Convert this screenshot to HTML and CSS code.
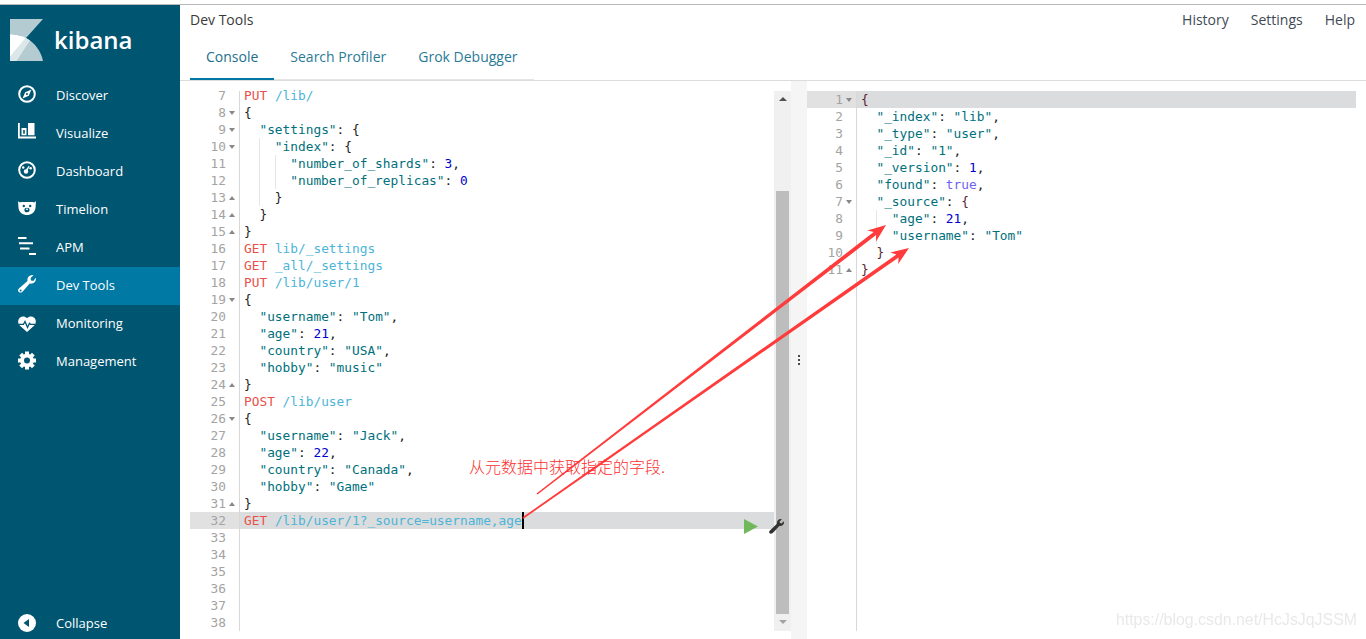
FILE: index.html
```html
<!DOCTYPE html>
<html lang="en">
<head>
<meta charset="utf-8">
<title>Dev Tools - Kibana</title>
<link rel="stylesheet" href="styles.css">
</head>
<body>
<div class="top-rule"></div>
<div class="app">
  <aside class="sidebar">
    <div class="brand">
      <svg class="brand-mark" viewBox="0 0 33 42">
        <path class="lm-top" d="M0 0H33L16 19C11 16.500 5 15.300 0 15.300Z"/>
        <path class="lm-right" d="M16 19C25 24 31 32 33 42H0V15.300C5 15.300 11 16.500 16 19Z"/>
        <path class="lm-white" d="M0 15.300C5 15.300 11 16.500 16 19L0 38Z"/>
        <path class="lm-mid" d="M16 19L20 21.500L6.500 42H0V38Z"/>
      </svg>
      <span class="brand-name">kibana</span>
    </div>
    <nav class="nav">
      <a class="nav-item"><svg class="nav-icon" viewBox="0 0 18 18"><circle class="ic-line" cx="9" cy="9" r="7.800"/><path class="ic-fill" d="M13.500 4.500L10.800 10.800L4.500 13.500L7.200 7.200ZM9 8A1 1 0 1 0 9 10A1 1 0 1 0 9 8Z"/></svg><span>Discover</span></a>
      <a class="nav-item"><svg class="nav-icon" viewBox="0 0 18 18"><path class="ic-fill" d="M0 0H1.800V13.600H18V15.500H0ZM3.500 5H8.500V12.300H3.500ZM10 0H16.500V12.300H10Z"/><path class="ic-hole" d="M5.200 7H6.800V10.800H5.200Z"/></svg><span>Visualize</span></a>
      <a class="nav-item"><svg class="nav-icon" viewBox="0 0 18 18"><circle class="ic-line" cx="9" cy="9" r="7.800"/><circle class="ic-fill" cx="8" cy="10.500" r="2.200"/><circle class="ic-fill" cx="5.200" cy="6.500" r="1.200"/><circle class="ic-fill" cx="12.600" cy="7.200" r="1.300"/><path class="ic-fill" d="M8 8.500L10.800 4.800L11.500 5.300L9.500 9.800Z"/></svg><span>Dashboard</span></a>
      <a class="nav-item"><svg class="nav-icon" viewBox="0 0 18 18"><path class="ic-fill" d="M0 2C1 3.500 2 3.400 3.500 3H14.500C16 3.400 17 3.500 18 2L17.500 9C17 13.500 13 16 9 16C5 16 1 13.500 .5 9Z"/><circle class="ic-hole" cx="5.800" cy="7" r="1.200"/><circle class="ic-hole" cx="12.200" cy="7" r="1.200"/><ellipse class="ic-hole" cx="9" cy="11" rx="2.600" ry="2.300"/><ellipse class="ic-fill" cx="9" cy="10.300" rx="1.200" ry=".8"/></svg><span>Timelion</span></a>
      <a class="nav-item"><svg class="nav-icon" viewBox="0 0 18 18"><path class="ic-fill" d="M0 0H8.500V2H0ZM1 5.300H15V7.300H1ZM2 10.500H11.500V12.500H2ZM11 16H18V18H11Z"/></svg><span>APM</span></a>
      <a class="nav-item is-active"><svg class="nav-icon" viewBox="0 0 18 18"><path class="ic-fill" d="M18 3.500C18 7 15 9.300 11.700 8.600L4.500 16.700C3.200 18 .9 17.800 .3 16.300C-.3 15 .3 14 1.200 13.200L9.500 6.100C8.800 2.900 11.300 0 14.700 0L15.500 .2L12.600 3L13 5.400L15.300 5.900L17.800 2.700Z"/><circle class="ic-hole-a" cx="2.600" cy="15.500" r="1"/></svg><span>Dev Tools</span></a>
      <a class="nav-item"><svg class="nav-icon" viewBox="0 0 18 18"><g transform="translate(0 3) scale(1 .92)"><path class="ic-fill" d="M9 17.500L2 10.500C-.5 8 -.3 4 1.800 2C4 0 7 .3 9 2.500C11 .3 14 0 16.200 2C18.300 4 18.500 8 16 10.500Z"/><path class="ic-stroke" d="M1 9H5.500L7 6L9.500 12.500L11.500 8L12.500 9H17"/></g></svg><span>Monitoring</span></a>
      <a class="nav-item"><svg class="nav-icon" viewBox="0 0 18 18"><g transform="translate(0 .5)"><circle class="ic-fill" cx="9" cy="9" r="6.800"/><rect class="ic-fill" x="7" y="0" width="4" height="18"/><rect class="ic-fill" x="7" y="0" width="4" height="18" transform="rotate(45 9 9)"/><rect class="ic-fill" x="7" y="0" width="4" height="18" transform="rotate(90 9 9)"/><rect class="ic-fill" x="7" y="0" width="4" height="18" transform="rotate(135 9 9)"/><circle class="ic-hole" cx="9" cy="9" r="3"/></g></svg><span>Management</span></a>
    </nav>
    <a class="nav-item collapse"><svg class="nav-icon" viewBox="0 0 18 18"><circle class="ic-fill" cx="9" cy="9" r="9"/><path class="ic-hole" d="M5.500 9L11 5V13Z"/></svg><span>Collapse</span></a>
  </aside>

  <main class="main">
    <header class="title-bar">
      <span class="page-title">Dev Tools</span>
      <div class="top-links"><a>History</a><a>Settings</a><a>Help</a></div>
    </header>
    <div class="tabs-bar">
      <div class="tabs">
        <a class="tab is-current">Console</a>
        <a class="tab">Search Profiler</a>
        <a class="tab">Grok Debugger</a>
      </div>
    </div>
    <section class="workspace">
      <div class="editor">
        <div class="code-scroll">
          <div class="line is-partial"><b>7</b><i></i><code><em class="m">PUT</em> <em class="u">/lib/</em></code></div>
          <div class="line"><b>8</b><i class="fo"></i><code>{</code></div>
          <div class="line"><b>9</b><i class="fo"></i><code><s></s><em class="k">"settings"</em>: {</code></div>
          <div class="line"><b>10</b><i class="fo"></i><code><s></s><s class="g"></s><em class="k">"index"</em>: {</code></div>
          <div class="line"><b>11</b><i></i><code><s></s><s class="g"></s><s class="g"></s><em class="k">"number_of_shards"</em>: <em class="n">3</em>,</code></div>
          <div class="line"><b>12</b><i></i><code><s></s><s class="g"></s><s class="g"></s><em class="k">"number_of_replicas"</em>: <em class="n">0</em></code></div>
          <div class="line"><b>13</b><i class="fc"></i><code><s></s><s class="g"></s>}</code></div>
          <div class="line"><b>14</b><i class="fc"></i><code><s></s>}</code></div>
          <div class="line"><b>15</b><i class="fc"></i><code>}</code></div>
          <div class="line"><b>16</b><i></i><code><em class="m">GET</em> <em class="u">lib/_settings</em></code></div>
          <div class="line"><b>17</b><i></i><code><em class="m">GET</em> <em class="u">_all/_settings</em></code></div>
          <div class="line"><b>18</b><i></i><code><em class="m">PUT</em> <em class="u">/lib/user/1</em></code></div>
          <div class="line"><b>19</b><i class="fo"></i><code>{</code></div>
          <div class="line"><b>20</b><i></i><code><s></s><em class="k">"username"</em>: <em class="k">"Tom"</em>,</code></div>
          <div class="line"><b>21</b><i></i><code><s></s><em class="k">"age"</em>: <em class="n">21</em>,</code></div>
          <div class="line"><b>22</b><i></i><code><s></s><em class="k">"country"</em>: <em class="k">"USA"</em>,</code></div>
          <div class="line"><b>23</b><i></i><code><s></s><em class="k">"hobby"</em>: <em class="k">"music"</em></code></div>
          <div class="line"><b>24</b><i class="fc"></i><code>}</code></div>
          <div class="line"><b>25</b><i></i><code><em class="m">POST</em> <em class="u">/lib/user</em></code></div>
          <div class="line"><b>26</b><i class="fo"></i><code>{</code></div>
          <div class="line"><b>27</b><i></i><code><s></s><em class="k">"username"</em>: <em class="k">"Jack"</em>,</code></div>
          <div class="line"><b>28</b><i></i><code><s></s><em class="k">"age"</em>: <em class="n">22</em>,</code></div>
          <div class="line"><b>29</b><i></i><code><s></s><em class="k">"country"</em>: <em class="k">"Canada"</em>,</code></div>
          <div class="line"><b>30</b><i></i><code><s></s><em class="k">"hobby"</em>: <em class="k">"Game"</em></code></div>
          <div class="line"><b>31</b><i class="fc"></i><code>}</code></div>
          <div class="line is-active"><b>32</b><i></i><code><em class="m">GET</em> <em class="u">/lib/user/1?_source=username,age</em><span class="caret"></span></code></div>
          <div class="line"><b>33</b><i></i><code></code></div>
          <div class="line"><b>34</b><i></i><code></code></div>
          <div class="line"><b>35</b><i></i><code></code></div>
          <div class="line"><b>36</b><i></i><code></code></div>
          <div class="line"><b>37</b><i></i><code></code></div>
          <div class="line"><b>38</b><i></i><code></code></div>
        </div>
        <svg class="play" viewBox="0 0 14 15"><path d="M0 0L14 7.500L0 15Z"/></svg>
        <svg class="wrench" viewBox="0 0 16 16"><path d="M16 3.500C16 6.500 13.500 8 11 7.500L4 15C3 16 1.500 16 .7 15.300C-.2 14.400 0 13 1 12.200L8.500 5C8 2.500 9.800 0 12.500 0L13.800 .2L11.200 2.800L11.800 4.300L13.300 4.800L15.800 2.300Z"/></svg>
      </div>
      <div class="scrollbar">
        <span class="sb-up"></span>
        <div class="sb-track"><div class="sb-thumb"></div></div>
        <span class="sb-down"></span>
      </div>
      <div class="splitter"><span></span><span></span><span></span></div>
      <div class="output">
        <div class="line is-first"><b>1</b><i class="fo"></i><code class="br">{</code></div>
        <div class="line"><b>2</b><i></i><code><s></s><em class="k">"_index"</em>: <em class="k">"lib"</em>,</code></div>
        <div class="line"><b>3</b><i></i><code><s></s><em class="k">"_type"</em>: <em class="k">"user"</em>,</code></div>
        <div class="line"><b>4</b><i></i><code><s></s><em class="k">"_id"</em>: <em class="k">"1"</em>,</code></div>
        <div class="line"><b>5</b><i></i><code><s></s><em class="k">"_version"</em>: <em class="n">1</em>,</code></div>
        <div class="line"><b>6</b><i></i><code><s></s><em class="k">"found"</em>: <em class="t">true</em>,</code></div>
        <div class="line"><b>7</b><i class="fo"></i><code><s></s><em class="k">"_source"</em>: <u>{</u></code></div>
        <div class="line"><b>8</b><i></i><code><s></s><s class="g"></s><em class="k">"age"</em>: <em class="n">21</em>,</code></div>
        <div class="line"><b>9</b><i></i><code><s></s><s class="g"></s><em class="k">"username"</em>: <em class="k">"Tom"</em></code></div>
        <div class="line"><b>10</b><i></i><code><s></s><u>}</u></code></div>
        <div class="line"><b>11</b><i class="fc"></i><code class="br">}</code></div>
        <div class="line is-filler"><b></b><i></i><code></code></div>
      </div>
    </section>
  </main>
</div>

<svg class="annot-arrows" viewBox="0 0 1366 639">
  <polygon points="537.500,494.600 876.100,235.100 876,241.600 886,225 867.400,230.400 873.700,231.900 536.500,493.400"/>
  <polygon points="523.500,518.700 898.600,257.600 898.200,264 909,248 890.200,252.600 896.400,254.400 522.500,517.300"/>
</svg>
<div class="annot-text">从元数据中获取指定的字段.</div>
<div class="watermark">https://blog.csdn.net/HcJsJqJSSM</div>
</body>
</html>
```
FILE: styles.css
```css
* { box-sizing: border-box; }
html, body { margin: 0; height: 639px; overflow: hidden; background: #fff; }
body { font-family: "Open Sans", "Liberation Sans", sans-serif; color: #2d2d2d; position: relative; }

.top-rule { height: 5px; border-bottom: 1px solid #b8b8b8; }
.app { display: flex; height: 634px; }

/* sidebar */
.sidebar { width: 180px; flex: none; background: #005571; color: #fff; display: flex; flex-direction: column; }
.brand { height: 72px; display: flex; align-items: flex-start; padding: 14px 0 0 10px; }
.brand-mark { width: 33px; height: 42px; flex: none; }
.lm-top, .lm-right { fill: #b4cbd2; }
.lm-white { fill: #fff; }
.lm-mid { fill: #dce7ea; }
.brand-name { margin-left: 11px; margin-top: 3px; font-size: 24px; line-height: 36px; font-weight: 600; color: #fff; }
.nav { display: flex; flex-direction: column; }
.nav-item { height: 38px; display: flex; align-items: center; padding: 0 0 2px 18px; gap: 20px; font-size: 13px; color: #fff; }
.nav-item.is-active { background: #0079a5; }
.nav-item.collapse { height: 32px; margin-top: auto; padding-bottom: 0; }
.nav-icon { width: 18px; height: 18px; flex: none; overflow: visible; margin-top: -2px; }
.collapse .nav-icon { margin-top: 0; }
.ic-fill { fill: #fff; }
.ic-line { fill: none; stroke: #fff; stroke-width: 2; }
.ic-hole { fill: #005571; }
.ic-hole-a { fill: #0079a5; }
.ic-stroke { fill: none; stroke: #005571; stroke-width: 1.300; }

/* main */
.main { flex: 1; min-width: 0; display: flex; flex-direction: column; }
.title-bar { height: 31px; display: flex; align-items: center; justify-content: space-between; padding: 0 11px 2px 10px; font-size: 14px; }
.page-title { color: #3a3a3a; }
.top-links { display: flex; gap: 22px; color: #3f4a55; }
.tabs-bar { height: 45px; border-bottom: 1px solid #dcdcdc; padding-left: 10px; }
.tabs { display: flex; width: 344px; height: 44px; border-bottom: 1px solid #e4e4e4; font-size: 14px; color: #2a7a96; }
.tab { padding: 0 16px; height: 44px; line-height: 41px; }
.tab.is-current { border-bottom: 2px solid #0079a5; color: #1c6f8c; }

.workspace { flex: 1; min-height: 0; display: flex; padding-left: 10px; }

/* editor */
.editor { width: 584px; flex: none; margin: 10px 0 8px; position: relative; }
.code-scroll { height: 540px; }
.output { width: 549px; flex: none; margin: 10px 0 8px; display: flex; flex-direction: column; }

.line { height: 17px; display: flex; font-family: "DejaVu Sans Mono", "Liberation Mono", monospace; font-size: 12.820px; line-height: 17px; color: #222; white-space: pre; }
.line b { width: 36px; flex: none; text-align: right; font-weight: 400; color: #a3a3a3; }
.line i { width: 14px; flex: none; position: relative; border-right: 1px solid #d8d8d8; }
.line code { font: inherit; padding-left: 4px; flex: 1; min-width: 0; }
.line em { font-style: normal; }
.line s { display: inline-block; width: 2ch; height: 17px; vertical-align: top; text-decoration: none; }
.line s.g { box-shadow: inset 1px 0 0 #e6e6e6; }
.line .m { color: #e8514a; }
.line .u { color: #4cb4d8; }
.line .k { color: #00707c; }
.line .n { color: #0000cd; }
.line .t { color: #6f63ef; }
.line u { text-decoration: none; color: #5a1e2e; }
.line .br { color: #5a1e2e; }
.line i.fo::after, .line i.fc::after { content: ""; position: absolute; left: 3px; top: 7px; border-left: 3px solid transparent; border-right: 3px solid transparent; }
.line i.fo::after { border-top: 4px solid #888; }
.line i.fc::after { border-bottom: 4px solid #888; }
.line.is-partial { height: 13px; }
.line.is-partial b, .line.is-partial code { margin-top: -4px; height: 17px; }
.line.is-active { background: #dbdcdd; }
.line.is-active b, .line.is-active i { background: #e1e1e2; }
.line.is-first { background: #dbdcdd; }
.line.is-first b, .line.is-first i { background: #e1e1e2; }
.line.is-filler { flex: 1; }
.output .line b { width: 36px; }
.output .line i { width: 14px; }
.caret { display: inline-block; width: 2px; height: 17px; background: #000; vertical-align: top; }

.play { position: absolute; left: 554px; top: 428px; width: 14px; height: 15px; fill: #70b85a; }
.wrench { position: absolute; left: 579px; top: 428px; width: 15px; height: 15px; fill: #333; z-index: 2; }

/* scrollbar */
.scrollbar { width: 17px; flex: none; margin: 10px 0 8px; background: #f0f0f0; display: flex; flex-direction: column; align-items: center; }
.sb-up { flex: none; margin-top: 6px; border-left: 4px solid transparent; border-right: 4px solid transparent; border-bottom: 4px solid #505050; height: 0; margin-bottom: 13px; }
.sb-track { flex: 1; width: 13px; padding-top: 77px; min-height: 0; display: flex; flex-direction: column; }
.sb-thumb { flex: 1; background: #bdbdbd; }
.sb-down { height: 17px; flex: none; width: 0; position: relative; }
.sb-down::after { content: ""; position: absolute; left: -4px; top: 6px; border-left: 4px solid transparent; border-right: 4px solid transparent; border-top: 4px solid #a3a3a3; }

/* splitter */
.splitter { width: 16px; flex: none; background: #f5f5f5; display: flex; flex-direction: column; align-items: center; justify-content: center; gap: 2px; }
.splitter span { width: 2px; height: 2px; background: #4a4a4a; }

/* overlays */
.annot-arrows { position: absolute; left: 0; top: 0; width: 1366px; height: 639px; fill: #ff3b3b; pointer-events: none; z-index: 3; }
.annot-text { position: absolute; left: 469px; top: 455px; font-family: "Noto Sans CJK SC", sans-serif; font-weight: 300; font-size: 16px; line-height: 22px; color: #fb3030; z-index: 4; }
.watermark { position: absolute; right: 9px; top: 610px; font-family: "Liberation Sans", sans-serif; font-size: 15.900px; line-height: 20px; color: #e9e9e9; z-index: 4; filter: blur(.3px); }
```
